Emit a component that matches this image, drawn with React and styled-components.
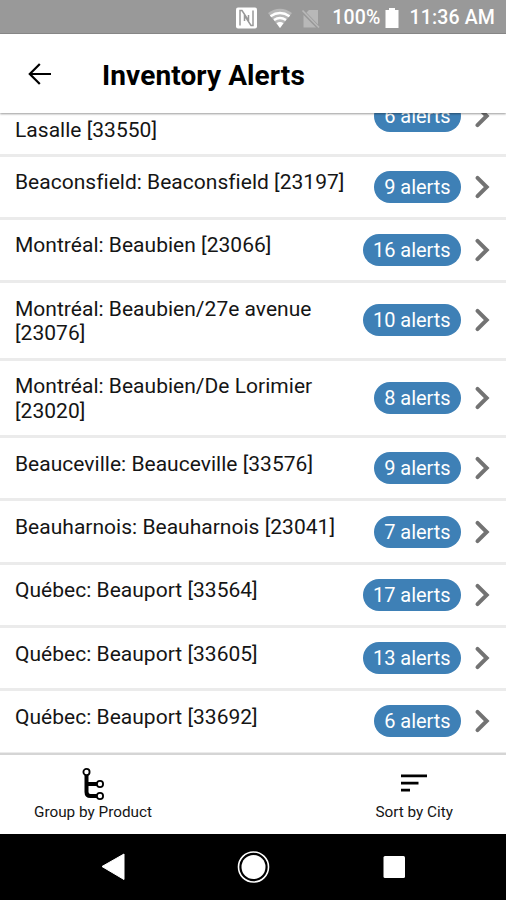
import styled, { createGlobalStyle } from 'styled-components';

const STORES = [
  { id: 1, name: 'Lasalle [33550]', alerts: 6, tall: true, continued: true },
  { id: 2, name: 'Beaconsfield: Beaconsfield [23197]', alerts: 9 },
  { id: 3, name: 'Montréal: Beaubien [23066]', alerts: 16 },
  { id: 4, name: 'Montréal: Beaubien/27e avenue [23076]', alerts: 10, tall: true },
  { id: 5, name: 'Montréal: Beaubien/De Lorimier [23020]', alerts: 8, tall: true },
  { id: 6, name: 'Beauceville: Beauceville [33576]', alerts: 9 },
  { id: 7, name: 'Beauharnois: Beauharnois [23041]', alerts: 7 },
  { id: 8, name: 'Québec: Beauport [33564]', alerts: 17 },
  { id: 9, name: 'Québec: Beauport [33605]', alerts: 13 },
  { id: 10, name: 'Québec: Beauport [33692]', alerts: 6 },
];

const GlobalStyle = createGlobalStyle`
  * {
    box-sizing: border-box;
  }
  body {
    margin: 0;
    font-family: Roboto, 'Liberation Sans', sans-serif;
    color: #151515;
    background: #fff;
  }
`;

const Screen = styled.div`
  display: flex;
  flex-direction: column;
  width: 506px;
  height: 900px;
  overflow: hidden;
`;

const StatusBar = styled.div`
  display: flex;
  flex: none;
  align-items: center;
  justify-content: flex-end;
  height: 34px;
  padding: 2px 11px 0 0;
  background: #999;
  border-bottom: 1px solid #8a8a8a;
  color: #fff;
  font-size: 19.5px;
  font-weight: 500;
  letter-spacing: 0.15px;
`;

const StatusIcons = styled.svg`
  margin-right: 11px;
`;

const Battery = styled.svg`
  margin: 0 10px 0 5px;
`;

const Header = styled.header`
  display: flex;
  flex: none;
  align-items: center;
  height: 79px;
  padding: 0 0 0 27px;
  background: #fff;
  box-shadow: 0 1px 2px rgba(0, 0, 0, 0.4);
  z-index: 1;
`;

const Title = styled.h1`
  margin: 4px 0 0 50px;
  color: #000;
  font-size: 28px;
  font-weight: 700;
  line-height: 32px;
  letter-spacing: 0.1px;
`;

const List = styled.ul`
  flex: 1;
  min-height: 0;
  margin: 0;
  padding: 0;
  list-style: none;
  overflow: hidden;
`;

const Row = styled.li`
  display: flex;
  align-items: center;
  height: ${({ $tall }) => ($tall ? 77.5 : 63.3)}px;
  margin-top: ${({ $continued }) => ($continued ? -34 : 0)}px;
  padding: 0 15px 0 15px;
  border-bottom: 3px solid #ebebeb;
`;

const Name = styled.span`
  flex: 1;
  align-self: flex-start;
  padding-top: ${({ $continued }) => ($continued ? 38.7 : 13.7)}px;
  font-size: 21px;
  line-height: 24.3px;
  letter-spacing: 0.02px;
`;

const Badge = styled.span`
  height: 32px;
  padding: 0 10.5px;
  border-radius: 16px;
  background: #3e80b6;
  color: #fff;
  font-size: 20px;
  line-height: 33px;
  letter-spacing: -0.05px;
  white-space: nowrap;
`;

const Chevron = styled.svg`
  flex: none;
  margin-left: 13px;
`;

const Footer = styled.footer`
  display: flex;
  flex: none;
  justify-content: space-between;
  height: 81px;
  padding: 12px 53px 0 34px;
  border-top: 2px solid #d5d5d5;
  background: #fff;
`;

const Action = styled.div`
  display: flex;
  flex-direction: column;
  align-items: center;
`;

const ActionLabel = styled.span`
  margin-top: 1px;
  font-size: 15.3px;
  line-height: 20px;
`;

const NavBar = styled.nav`
  flex: none;
  height: 66px;
  background: #000;
`;

function StoreRow({ name, alerts, tall, continued }) {
  return (
    <Row $tall={tall} $continued={continued}>
      <Name $continued={continued}>{name}</Name>
      <Badge>{alerts} alerts</Badge>
      <Chevron width="17" height="26" viewBox="0 0 17 26" fill="none" stroke="#737373" strokeWidth="4">
        <path d="M3.500 3.800l9.200 9.200-9.200 9.200" strokeLinecap="round" />
      </Chevron>
    </Row>
  );
}

function App() {
  return (
    <Screen>
      <GlobalStyle />
      <StatusBar>
        <StatusIcons width="86" height="24" viewBox="235 5 86 24">
          <path d="M238 6.500h17q2 0 2 2v17q0 2-2 2h-17q-2 0-2-2v-17q0-2 2-2z" fill="#fff" />
          <path
            d="M240 24.500V9.500h2l6.500 10V14M253 9.500v15h-2l-6.500-10V20"
            fill="none"
            stroke="#999"
            strokeWidth="1.500"
          />
          <path d="M268 12q12-8.500 24 0L280 27z" fill="#b8b8b8" />
          <g fill="none" stroke="#fff" strokeWidth="2.400">
            <path d="M270.500 15.200q9.500-6.500 19 0" />
            <path d="M274 19q6-4 12 0" />
          </g>
          <path d="M276.500 22.200q3.500-2.300 7 0L280 27z" fill="#fff" />
          <path d="M309 9h9v14.500L306.500 11.500zM303.500 14v12.500h12.500z" fill="#b8b8b8" />
          <path d="M302.500 9.500L319 26.500" stroke="#b8b8b8" strokeWidth="1.700" />
        </StatusIcons>
        100%
        <Battery width="14" height="22" viewBox="0 0 14 22">
          <path d="M4 1h6v2h3.500v18H.5V3H4z" fill="#fff" />
        </Battery>
        11:36 AM
      </StatusBar>
      <Header>
        <svg width="25" height="24" viewBox="0 0 25 24" fill="none" stroke="#000" strokeWidth="2.200">
          <path d="M24 12H3M12.800 2L2.800 12l10 10" />
        </svg>
        <Title>Inventory Alerts</Title>
      </Header>
      <List>
        {STORES.map((store) => (
          <StoreRow key={store.id} {...store} />
        ))}
      </List>
      <Footer>
        <Action>
          <svg width="24" height="34" viewBox="0 0 24 34" fill="none" stroke="#000">
            <path d="M5.500 8v17q0 4 4 4H16M5.500 17H16" strokeWidth="4" />
            <g fill="#fff" strokeWidth="1.800">
              <circle cx="5.500" cy="5" r="3.100" />
              <circle cx="19" cy="17" r="3.100" />
              <circle cx="19" cy="29" r="3.100" />
            </g>
          </svg>
          <ActionLabel>Group by Product</ActionLabel>
        </Action>
        <Action>
          <svg width="26" height="34" viewBox="0 0 26 34" fill="#000">
            <path d="M0 7.500h26v2.800H0zM0 14.700h17.500v2.800H0zM0 21.700h9v2.800H0z" />
          </svg>
          <ActionLabel>Sort by City</ActionLabel>
        </Action>
      </Footer>
      <NavBar>
        <svg width="506" height="66" viewBox="0 834 506 66" fill="#fff">
          <path d="M102 866.500L124 854v25.500z" stroke="#fff" strokeLinejoin="round" />
          <circle cx="253.500" cy="867" r="15" fill="none" stroke="#fff" strokeWidth="1.600" />
          <circle cx="253.500" cy="867" r="12" />
          <rect x="383.500" y="856" width="21.500" height="22" rx="1.500" />
        </svg>
      </NavBar>
    </Screen>
  );
}

export default App;
